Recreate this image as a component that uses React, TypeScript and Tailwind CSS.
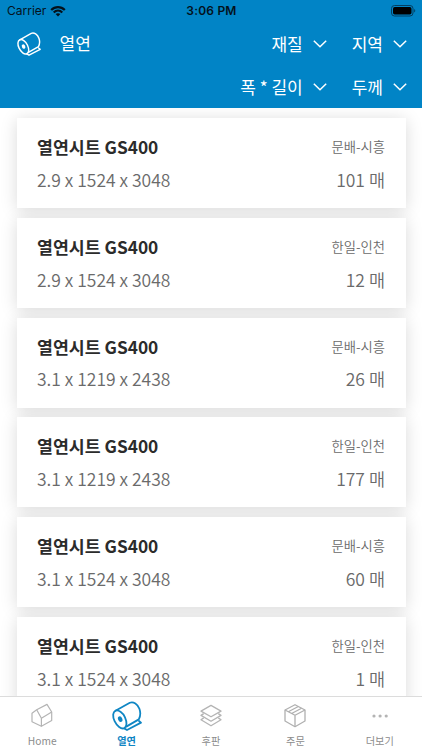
import React from "react";

const SANS = "font-['Noto_Sans_CJK_KR',sans-serif]";

function Coil({ className }: { className: string }) {
  return (
    <svg viewBox="0 0 30 30" className={className} fill="none" stroke="currentColor" strokeWidth="1.8" strokeLinejoin="round" strokeLinecap="round">
      <path d="M3.5 9.7C6.4 8.5 10.8 11.6 13 16.3 15.2 21.2 15 25.8 12.2 27.2 9.2 28.6 4.9 25 2.6 20.2.4 15.5.7 11 3.5 9.7Z" />
      <ellipse cx="8.2" cy="18.2" rx="1.2" ry="2" transform="rotate(-25 8.2 18.2)" fill="currentColor" />
      <path d="M3.5 9.7 17.8 1.8C21.4.2 25.8 3.2 27.4 7.8 28.9 12 28.4 15.4 26.8 18.4L14.3 25.6" />
      <path d="M12.2 27.4 15 29 29 21.6 27 20" />
    </svg>
  );
}

function House() {
  return (
    <svg viewBox="0 0 24 26" className="h-[26px] w-6" fill="none" stroke="#b4b4b4" strokeWidth="1.2" strokeLinejoin="round">
      <path d="M2 10.3 6.7 6.8 17 1.4 21.7 9V17.5L11.4 23.3 2 18.7Z" />
      <path d="M6.7 6.8 11.4 15.3V23.3M11.4 15.3 21.7 9" />
    </svg>
  );
}

function Layers() {
  return (
    <svg viewBox="0 0 24 26" className="h-[26px] w-6" fill="none" stroke="#b4b4b4" strokeWidth="1.3" strokeLinejoin="round">
      <path d="M12 2.4 22 8.1 12 13.8 2 8.1Z" />
      <path d="M4.7 10.6 2 12.4 12 18.2 22 12.4 19.3 10.6" />
      <path d="M4.7 14.9 2 16.8 12 22.8 22 16.8 19.3 14.9" />
    </svg>
  );
}

function Box() {
  return (
    <svg viewBox="0 0 24 26" className="h-[26px] w-6" fill="none" stroke="#b0b0b0" strokeWidth="1.3" strokeLinejoin="round">
      <path d="M12 1.7 22 7V18L12 23.7 2 18V7Z" />
      <path d="M2 7 12 12.3 22 7M12 12.3V23.7M5.3 8.8 15.3 3.5M8.6 10.5 18.6 5.2" />
    </svg>
  );
}

function Dots() {
  return (
    <svg viewBox="0 0 24 26" className="h-[26px] w-6" fill="#b4b4b4">
      <circle cx="6" cy="13" r="1.6" />
      <circle cx="12.1" cy="13" r="1.6" />
      <circle cx="18.2" cy="13" r="1.6" />
    </svg>
  );
}

function Filter({ label }: { label: string }) {
  return (
    <button className="flex items-center">
      <span className="text-[17px] leading-[24px]">{label}</span>
      <svg viewBox="0 0 14 8" className="ml-[10px] h-2 w-3.5" fill="none" stroke="currentColor" strokeWidth="1.5">
        <path d="M.8 .8 7 6.8 13.2 .8" />
      </svg>
    </button>
  );
}

function StatusBar() {
  return (
    <div className="grid h-[22px] grid-cols-3 items-center pl-[7px] pr-[6px] font-[Inter,sans-serif] text-[12px] text-[#04121c]">
      <div className="flex items-center gap-[4px]">
        <span>Carrier</span>
        <svg viewBox="0 0 16 12" className="h-[12px] w-4" fill="none" stroke="#04121c" strokeWidth="2.2">
          <path d="M1.2 5C5 1.2 11 1.2 14.8 5M3.7 7.5C6.2 5.1 9.8 5.1 12.3 7.5" />
          <path d="M5.6 9.1C7 7.9 9 7.9 10.4 9.1L8 11.5Z" fill="#04121c" stroke="none" />
        </svg>
      </div>
      <span className="text-center font-semibold tracking-[0.2px]">3:06 PM</span>
      <svg viewBox="0 0 25 12" className="h-3 w-[25px] justify-self-end">
        <rect x=".5" y=".5" width="21.5" height="10.5" rx="3" fill="none" stroke="#033f61" />
        <rect x="2" y="2" width="18.5" height="7.5" rx="1.7" fill="#000" />
        <path d="M23.2 4C24.6 4.6 24.6 7 23.2 7.6Z" fill="#033f61" />
      </svg>
    </div>
  );
}

const items = [
  { size: "2.9 x 1524 x 3048", place: "문배-시흥", count: 101 },
  { size: "2.9 x 1524 x 3048", place: "한일-인천", count: 12 },
  { size: "3.1 x 1219 x 2438", place: "문배-시흥", count: 26 },
  { size: "3.1 x 1219 x 2438", place: "한일-인천", count: 177 },
  { size: "3.1 x 1524 x 3048", place: "문배-시흥", count: 60 },
  { size: "3.1 x 1524 x 3048", place: "한일-인천", count: 1 },
];

const tabs = [
  { label: "Home", icon: <House /> },
  { label: "열연", icon: <Coil className="h-[30px] w-[30px]" />, active: true },
  { label: "후판", icon: <Layers /> },
  { label: "주문", icon: <Box /> },
  { label: "더보기", icon: <Dots /> },
];

export default function App() {
  return (
    <div className={`flex h-[750px] w-[422px] flex-col overflow-hidden bg-white ${SANS}`}>
      <header className="h-[108px] shrink-0 bg-[#0184c6] text-white">
        <StatusBar />
        <div className="flex h-[43px] items-center pl-[17px] pr-[15px]">
          <Coil className="h-6 w-6" />
          <h1 className="mb-[2px] ml-[18.5px] text-[17px] leading-[24px]">열연</h1>
          <div className="ml-auto flex gap-[25px]">
            <Filter label="재질" />
            <Filter label="지역" />
          </div>
        </div>
        <div className="flex h-[44px] items-center justify-end gap-[25px] pr-[15px]">
          <Filter label="폭 * 길이" />
          <Filter label="두께" />
        </div>
      </header>
      <main className="isolate flex min-h-0 flex-1 flex-col gap-[9.7px] overflow-hidden px-[16.5px] pt-[10.2px]">
        {items.map((item, i) => (
          <div key={i} className="h-[90px] shrink-0 shadow-[0_2px_16px_rgba(0,0,0,0.15)]">
            <div className="relative z-10 flex h-full flex-col bg-white px-[20.5px] pt-[15px]">
              <div className="flex h-[28px] items-center justify-between">
                <span className="text-[17.3px] font-bold text-[#2b2b2b]">열연시트 GS400</span>
                <span className="text-[13.3px] font-[350] text-[#6a6a6a]">{item.place}</span>
              </div>
              <div className="mt-[5px] flex h-[28px] items-center justify-between text-[17.5px] font-[350] text-[#6a6a6a]">
                <span>{item.size}</span>
                <span>{item.count} 매</span>
              </div>
            </div>
          </div>
        ))}
      </main>
      <nav className="relative z-20 grid h-[54px] shrink-0 grid-cols-5 border-t border-[#dcdcdc] bg-white">
        {tabs.map((tab) => (
          <div key={tab.label} className={`flex flex-col items-center ${tab.active ? "font-bold text-[#0f86c4]" : "text-[#8c8c8c]"}`}>
            <div className="flex h-[37px] items-center">{tab.icon}</div>
            <span className="text-[10.2px] leading-[14px]">{tab.label}</span>
          </div>
        ))}
      </nav>
    </div>
  );
}
